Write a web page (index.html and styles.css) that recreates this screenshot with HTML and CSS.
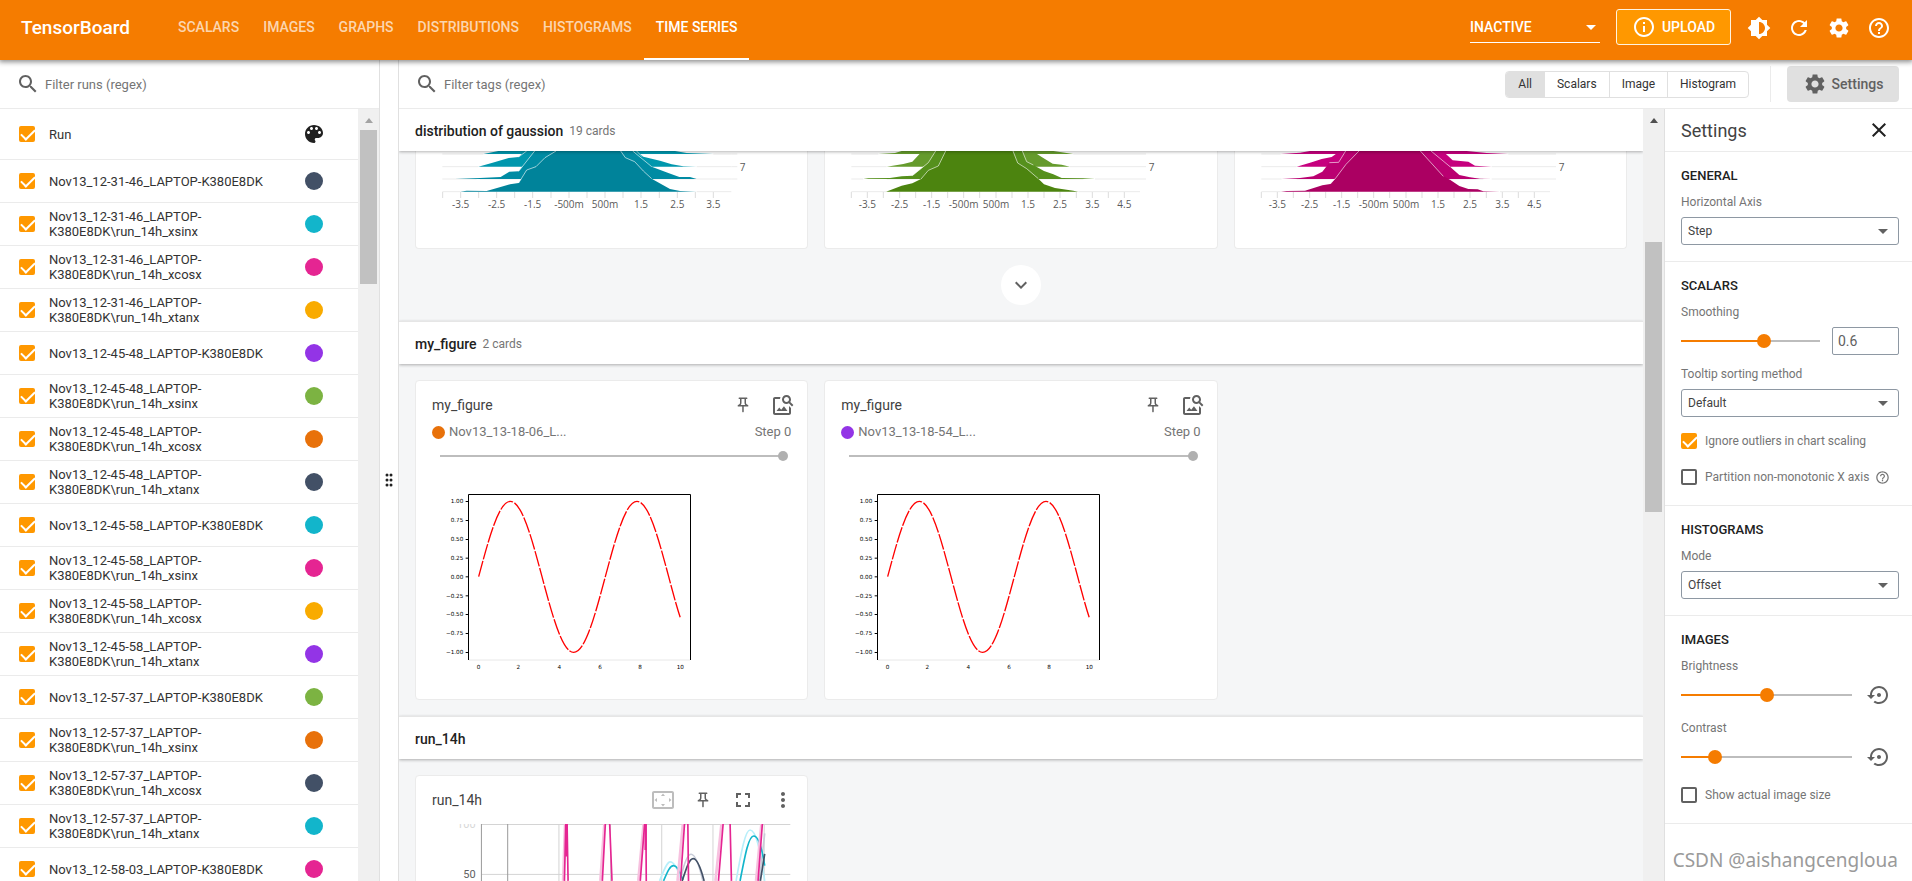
FILE: index.html
```html
<!DOCTYPE html>
<html lang="en">
<head>
<meta charset="utf-8">
<title>TensorBoard</title>
<link rel="stylesheet" href="styles.css">
</head>
<body>
<svg class="sprite" aria-hidden="true">
  <symbol id="search" viewBox="0 0 24 24"><path d="M15.5 14h-.79l-.28-.27C15.41 12.59 16 11.11 16 9.5 16 5.91 13.09 3 9.5 3S3 5.91 3 9.5 5.91 16 9.5 16c1.61 0 3.09-.59 4.23-1.57l.27.28v.79l5 4.99L20.49 19l-4.99-5zm-6 0C7.01 14 5 11.99 5 9.5S7.01 5 9.5 5 14 7.01 14 9.5 11.99 14 9.5 14z"/></symbol>
  <symbol id="palette" viewBox="0 0 24 24"><path d="M12 3c-4.97 0-9 4.03-9 9s4.03 9 9 9c.83 0 1.5-.67 1.5-1.5 0-.39-.15-.74-.39-1.01-.23-.26-.38-.61-.38-.99 0-.83.67-1.5 1.5-1.5H16c2.76 0 5-2.24 5-5 0-4.42-4.03-8-9-8zm-5.5 9c-.83 0-1.5-.67-1.5-1.5S5.67 9 6.5 9 8 9.67 8 10.5 7.33 12 6.5 12zm3-4C8.67 8 8 7.33 8 6.5S8.67 5 9.5 5s1.5.67 1.5 1.5S10.33 8 9.5 8zm5 0c-.83 0-1.5-.67-1.5-1.5S13.67 5 14.5 5s1.5.67 1.5 1.5S15.33 8 14.5 8zm3 4c-.83 0-1.5-.67-1.5-1.5S16.67 9 17.5 9s1.5.67 1.5 1.5-.67 1.5-1.5 1.5z"/></symbol>
  <symbol id="gear" viewBox="0 0 24 24"><path d="M19.14 12.94c.04-.3.06-.61.06-.94 0-.32-.02-.64-.07-.94l2.03-1.58c.18-.14.23-.41.12-.61l-1.92-3.32c-.12-.22-.37-.29-.59-.22l-2.39.96c-.5-.38-1.03-.7-1.62-.94l-.36-2.54c-.04-.24-.24-.41-.48-.41h-3.84c-.24 0-.43.17-.47.41l-.36 2.54c-.59.24-1.13.57-1.62.94l-2.39-.96c-.22-.08-.47 0-.59.22L2.74 8.87c-.12.21-.08.47.12.61l2.03 1.58c-.05.3-.09.63-.09.94s.02.64.07.94l-2.03 1.58c-.18.14-.23.41-.12.61l1.92 3.32c.12.22.37.29.59.22l2.39-.96c.5.38 1.03.7 1.62.94l.36 2.54c.05.24.24.41.48.41h3.84c.24 0 .44-.17.47-.41l.36-2.54c.59-.24 1.13-.56 1.62-.94l2.39.96c.22.08.47 0 .59-.22l1.92-3.32c.12-.22.07-.47-.12-.61l-2.01-1.58zM12 15.6c-1.98 0-3.6-1.62-3.6-3.6s1.62-3.6 3.6-3.6 3.6 1.62 3.6 3.6-1.62 3.6-3.6 3.6z"/></symbol>
  <symbol id="brightness" viewBox="0 0 24 24"><path d="M20 15.31L23.31 12 20 8.69V4h-4.69L12 .69 8.69 4H4v4.69L.69 12 4 15.31V20h4.69L12 23.31 15.31 20H20v-4.69zM12 18V6c3.31 0 6 2.69 6 6s-2.69 6-6 6z"/></symbol>
  <symbol id="refresh" viewBox="0 0 24 24"><path d="M17.65 6.35C16.2 4.9 14.21 4 12 4c-4.42 0-7.99 3.58-7.99 8s3.57 8 7.99 8c3.73 0 6.84-2.55 7.73-6h-2.08c-.82 2.33-3.04 4-5.65 4-3.31 0-6-2.69-6-6s2.69-6 6-6c1.66 0 3.14.69 4.22 1.78L13 11h7V4l-2.35 2.35z"/></symbol>
  <symbol id="help" viewBox="0 0 24 24"><path d="M11 18h2v-2h-2v2zm1-16C6.48 2 2 6.48 2 12s4.48 10 10 10 10-4.48 10-10S17.52 2 12 2zm0 18c-4.41 0-8-3.59-8-8s3.59-8 8-8 8 3.59 8 8-3.59 8-8 8zm0-14c-2.21 0-4 1.79-4 4h2c0-1.1.9-2 2-2s2 .9 2 2c0 2-3 1.75-3 5h2c0-2.25 3-2.5 3-5 0-2.21-1.79-4-4-4z"/></symbol>
  <symbol id="info" viewBox="0 0 24 24"><path d="M11 7h2v2h-2zm0 4h2v6h-2zm1-9C6.48 2 2 6.48 2 12s4.48 10 10 10 10-4.48 10-10S17.52 2 12 2zm0 18c-4.41 0-8-3.59-8-8s3.59-8 8-8 8 3.59 8 8-3.59 8-8 8z"/></symbol>
  <symbol id="close" viewBox="0 0 24 24"><path d="M19 6.41L17.59 5 12 10.59 6.41 5 5 6.41 10.59 12 5 17.59 6.41 19 12 13.41 17.59 19 19 17.59 13.41 12z"/></symbol>
  <symbol id="expand" viewBox="0 0 24 24"><path d="M16.59 8.59L12 13.17 7.41 8.59 6 10l6 6 6-6z"/></symbol>
  <symbol id="fullscreen" viewBox="0 0 24 24"><path d="M7 14H5v5h5v-2H7v-3zm-2-4h2V7h3V5H5v5zm12 7h-3v2h5v-5h-2v3zM14 5v2h3v3h2V5h-5z"/></symbol>
  <symbol id="more" viewBox="0 0 24 24"><path d="M12 8c1.1 0 2-.9 2-2s-.9-2-2-2-2 .9-2 2 .9 2 2 2zm0 2c-1.1 0-2 .9-2 2s.9 2 2 2 2-.9 2-2-.9-2-2-2zm0 6c-1.1 0-2 .9-2 2s.9 2 2 2 2-.9 2-2-.9-2-2-2z"/></symbol>
  <symbol id="overscan" viewBox="0 0 24 24"><path d="M12.01 5.5L10 8h4l-1.99-2.5zM18 10v4l2.5-1.99L18 10zM6 10l-2.5 2.01L6 14v-4zm8 6h-4l2.01 2.5L14 16zm7-13H3c-1.1 0-2 .9-2 2v14c0 1.1.9 2 2 2h18c1.1 0 2-.9 2-2V5c0-1.1-.9-2-2-2zm0 16.01H3V4.99h18v14.02z"/></symbol>
  <symbol id="image-search" viewBox="0 0 24 24"><path d="M18 13v7H4V6h5.02c.05-.71.22-1.38.48-2H4c-1.1 0-2 .9-2 2v14c0 1.1.9 2 2 2h14c1.1 0 2-.9 2-2v-5l-2-2zm-1.5 5h-11l2.75-3.53 1.96 2.36 2.75-3.54zm2.8-9.11c.44-.7.7-1.51.7-2.39C20 4.01 17.99 2 15.5 2S11 4.01 11 6.5s2.01 4.5 4.49 4.5c.88 0 1.7-.26 2.39-.7L21 13.42 22.42 12 19.3 8.89zM15.5 9C14.12 9 13 7.88 13 6.5S14.12 4 15.5 4 18 5.12 18 6.5 16.88 9 15.5 9z"/></symbol>
  <symbol id="pin" viewBox="0 0 24 24"><path d="M14 4v5c0 1.12.37 2.16 1 3H9c.65-.86 1-1.9 1-3V4h4m3-2H7c-.55 0-1 .45-1 1s.45 1 1 1h1v5c0 1.66-1.34 3-3 3v2h5.97v7l1 1 1-1v-7H19v-2c-1.66 0-3-1.34-3-3V4h1c.55 0 1-.45 1-1s-.45-1-1-1z"/></symbol>
  <symbol id="restore" viewBox="0 0 24 24"><path d="M14 12c0-1.1-.9-2-2-2s-2 .9-2 2 .9 2 2 2 2-.9 2-2zm-2-9c-4.97 0-9 4.03-9 9H0l4 4 4-4H5c0-3.87 3.13-7 7-7s7 3.13 7 7-3.13 7-7 7c-1.51 0-2.91-.49-4.06-1.3l-1.42 1.44C8.04 20.3 9.94 21 12 21c4.97 0 9-4.03 9-9s-4.03-9-9-9z"/></symbol>
</svg>

<header class="topbar">
  <h1 class="brand">TensorBoard</h1>
  <nav class="tabs">
    <a class="tab" href="#scalars">SCALARS</a>
    <a class="tab" href="#images">IMAGES</a>
    <a class="tab" href="#graphs">GRAPHS</a>
    <a class="tab" href="#distributions">DISTRIBUTIONS</a>
    <a class="tab" href="#histograms">HISTOGRAMS</a>
    <a class="tab tab-active" href="#timeseries">TIME SERIES</a>
  </nav>
  <div class="top-actions">
    <div class="inactive-wrap"><select class="inactive" aria-label="Inactive plugins"><option>INACTIVE</option></select></div>
    <button class="upload" type="button"><svg class="icon"><use href="#info"/></svg><span>UPLOAD</span></button>
    <button class="icon-btn" type="button" aria-label="Theme"><svg class="icon"><use href="#brightness"/></svg></button>
    <button class="icon-btn" type="button" aria-label="Reload"><svg class="icon"><use href="#refresh"/></svg></button>
    <button class="icon-btn" type="button" aria-label="Preferences"><svg class="icon"><use href="#gear"/></svg></button>
    <button class="icon-btn" type="button" aria-label="Help"><svg class="icon"><use href="#help"/></svg></button>
  </div>
</header>

<div class="workspace">
  <aside class="runs">
    <div class="filter-bar">
      <svg class="icon"><use href="#search"/></svg>
      <input class="filter" type="text" placeholder="Filter runs (regex)" aria-label="Filter runs">
    </div>
    <div class="runs-body">
      <table class="run-table">
        <thead>
          <tr><td class="c-check"><input class="check" type="checkbox" id="rall" checked></td><th><label for="rall">Run</label></th><td class="c-color"><svg class="icon icon-dark"><use href="#palette"/></svg></td></tr>
        </thead>
        <tbody>
          <tr><td class="c-check"><input class="check" type="checkbox" id="r1" checked></td><td><label for="r1">Nov13_12-31-46_LAPTOP-K380E8DK</label></td><td class="c-color"><i class="dot navy"></i></td></tr>
          <tr><td class="c-check"><input class="check" type="checkbox" id="r2" checked></td><td><label for="r2">Nov13_12-31-46_LAPTOP-K380E8DK\run_14h_xsinx</label></td><td class="c-color"><i class="dot cyan"></i></td></tr>
          <tr><td class="c-check"><input class="check" type="checkbox" id="r3" checked></td><td><label for="r3">Nov13_12-31-46_LAPTOP-K380E8DK\run_14h_xcosx</label></td><td class="c-color"><i class="dot pink"></i></td></tr>
          <tr><td class="c-check"><input class="check" type="checkbox" id="r4" checked></td><td><label for="r4">Nov13_12-31-46_LAPTOP-K380E8DK\run_14h_xtanx</label></td><td class="c-color"><i class="dot amber"></i></td></tr>
          <tr><td class="c-check"><input class="check" type="checkbox" id="r5" checked></td><td><label for="r5">Nov13_12-45-48_LAPTOP-K380E8DK</label></td><td class="c-color"><i class="dot purple"></i></td></tr>
          <tr><td class="c-check"><input class="check" type="checkbox" id="r6" checked></td><td><label for="r6">Nov13_12-45-48_LAPTOP-K380E8DK\run_14h_xsinx</label></td><td class="c-color"><i class="dot green"></i></td></tr>
          <tr><td class="c-check"><input class="check" type="checkbox" id="r7" checked></td><td><label for="r7">Nov13_12-45-48_LAPTOP-K380E8DK\run_14h_xcosx</label></td><td class="c-color"><i class="dot orange"></i></td></tr>
          <tr><td class="c-check"><input class="check" type="checkbox" id="r8" checked></td><td><label for="r8">Nov13_12-45-48_LAPTOP-K380E8DK\run_14h_xtanx</label></td><td class="c-color"><i class="dot navy"></i></td></tr>
          <tr><td class="c-check"><input class="check" type="checkbox" id="r9" checked></td><td><label for="r9">Nov13_12-45-58_LAPTOP-K380E8DK</label></td><td class="c-color"><i class="dot cyan"></i></td></tr>
          <tr><td class="c-check"><input class="check" type="checkbox" id="r10" checked></td><td><label for="r10">Nov13_12-45-58_LAPTOP-K380E8DK\run_14h_xsinx</label></td><td class="c-color"><i class="dot pink"></i></td></tr>
          <tr><td class="c-check"><input class="check" type="checkbox" id="r11" checked></td><td><label for="r11">Nov13_12-45-58_LAPTOP-K380E8DK\run_14h_xcosx</label></td><td class="c-color"><i class="dot amber"></i></td></tr>
          <tr><td class="c-check"><input class="check" type="checkbox" id="r12" checked></td><td><label for="r12">Nov13_12-45-58_LAPTOP-K380E8DK\run_14h_xtanx</label></td><td class="c-color"><i class="dot purple"></i></td></tr>
          <tr><td class="c-check"><input class="check" type="checkbox" id="r13" checked></td><td><label for="r13">Nov13_12-57-37_LAPTOP-K380E8DK</label></td><td class="c-color"><i class="dot green"></i></td></tr>
          <tr><td class="c-check"><input class="check" type="checkbox" id="r14" checked></td><td><label for="r14">Nov13_12-57-37_LAPTOP-K380E8DK\run_14h_xsinx</label></td><td class="c-color"><i class="dot orange"></i></td></tr>
          <tr><td class="c-check"><input class="check" type="checkbox" id="r15" checked></td><td><label for="r15">Nov13_12-57-37_LAPTOP-K380E8DK\run_14h_xcosx</label></td><td class="c-color"><i class="dot navy"></i></td></tr>
          <tr><td class="c-check"><input class="check" type="checkbox" id="r16" checked></td><td><label for="r16">Nov13_12-57-37_LAPTOP-K380E8DK\run_14h_xtanx</label></td><td class="c-color"><i class="dot cyan"></i></td></tr>
          <tr><td class="c-check"><input class="check" type="checkbox" id="r17" checked></td><td><label for="r17">Nov13_12-58-03_LAPTOP-K380E8DK</label></td><td class="c-color"><i class="dot pink"></i></td></tr>
        </tbody>
      </table>
      <div class="scrollbar"><i class="arrow arrow-dim"></i><i class="thumb thumb-runs"></i></div>
    </div>
  </aside>

  <div class="resizer">
    <svg class="grip" viewBox="0 0 8 14"><g><circle cx="2" cy="2" r="1.500"/><circle cx="6" cy="2" r="1.500"/><circle cx="2" cy="7" r="1.500"/><circle cx="6" cy="7" r="1.500"/><circle cx="2" cy="12" r="1.500"/><circle cx="6" cy="12" r="1.500"/></g></svg>
  </div>

  <main class="main">
    <div class="filter-bar">
      <svg class="icon"><use href="#search"/></svg>
      <input class="filter" type="text" placeholder="Filter tags (regex)" aria-label="Filter tags">
      <div class="toggles">
        <button class="toggle toggle-on" type="button">All</button>
        <button class="toggle" type="button">Scalars</button>
        <button class="toggle" type="button">Image</button>
        <button class="toggle" type="button">Histogram</button>
      </div>
      <div class="settings-slot">
        <button class="settings-btn" type="button"><svg class="icon"><use href="#gear"/></svg><span>Settings</span></button>
      </div>
    </div>

    <div class="content">
      <div class="groups">
        <section>
          <div class="group-head"><h2 class="group-name">distribution of gaussion</h2><span class="count">19 cards</span></div>
          <div class="grid grid-scrolled">
            <article class="card card-cut">
              <svg class="histo" viewBox="3 18 990 192">
                <path class="guide" d="M37 27H160M850 27H904M37 65H145M800 65H904M37 102H140M800 102H904M150 102H270M665 102H800M37 140H90M800 140H904M904 27h18M904 65h18M904 102h18"/>
                <g fill="#0097ad"><path d="M160 27L205 18H735L770 24L850 27z"/><path d="M75 65L145 65L185 54L236 39L266 36L285 18H620L640 35L690 47L725 58L760 64L800 65z"/></g>
                <path fill="#008ba3" d="M75 102L150 99L212 96L238 80L266 79L314 18H608L665 65L715 84L748 96L780 96L800 102z"/>
                <path class="rim" d="M266 36L290 18M620 18L636 35M266 79L314 18M608 18L665 65"/>
                <path fill="#00839a" d="M90 140L110 137L170 138L240 118L266 114L290 75L318 65L345 38L378 18H572L586 38L614 50L640 78L665 101L720 132L750 138L800 140z"/>
                <path class="rim" d="M266 114L290 75L318 65L345 38L378 18M572 18L586 38L614 50L640 78L665 101"/>
                <path class="ticks" d="M38 141v18M92 141v18M146 141v18M200 141v18M254 141v18M308 141v18M363 141v18M417 141v18M471 141v18M525 141v18M579 141v18M633 141v18M688 141v18M742 141v18M796 141v18M850 141v18"/>
                <g class="axis"><text x="92" y="188">-3.5</text><text x="200" y="188">-2.5</text><text x="308" y="188">-1.5</text><text x="417" y="188">-500m</text><text x="525" y="188">500m</text><text x="633" y="188">1.5</text><text x="742" y="188">2.5</text><text x="850" y="188">3.5</text><text x="938" y="77">7</text></g>
              </svg>
            </article>
            <article class="card card-cut">
              <svg class="histo" viewBox="0 18 990 192">
                <path class="guide" d="M34 27H115M700 27H900M34 65H140M690 65H900M34 102H70M765 102H900M140 102H243M598 102H730M34 140H138M715 140H900M900 27h18M900 65h18M900 102h18"/>
                <g fill="#659b2c"><path d="M115 27L165 24L185 18H640L700 27z"/><path d="M140 65L190 57L217 50L247 18H577L605 36L638 56L665 59L690 65z"/></g>
                <path fill="#55901c" d="M70 102L85 100L150 99L185 94L217 92L265 53L287 18H547L560 50L580 60L612 78L640 88L665 99L730 100L765 102z"/>
                <path class="rim" d="M217 92L265 53L287 18M547 18L560 50L580 60"/>
                <path fill="#4c840f" d="M138 140L185 122L217 115L243 102L265 76L295 63L317 18H519L533 54L560 71L595 101L612 118L645 129L700 137L715 140z"/>
                <path class="rim" d="M243 102L265 76L295 63L317 18M519 18L533 54L560 71L595 101"/>
                <path class="ticks" d="M34 141v18M82 141v18M130 141v18M179 141v18M227 141v18M275 141v18M323 141v18M371 141v18M419 141v18M468 141v18M516 141v18M564 141v18M612 141v18M660 141v18M709 141v18M757 141v18M805 141v18M853 141v18"/>
                <g class="axis"><text x="82" y="188">-3.5</text><text x="179" y="188">-2.5</text><text x="275" y="188">-1.5</text><text x="371" y="188">-500m</text><text x="468" y="188">500m</text><text x="564" y="188">1.5</text><text x="660" y="188">2.5</text><text x="757" y="188">3.5</text><text x="853" y="188">4.5</text><text x="935" y="77">7</text></g>
              </svg>
            </article>
            <article class="card card-cut">
              <svg class="histo" viewBox="0 18 990 192">
                <path class="guide" d="M34 27H92M775 27H900M34 65H140M725 65H900M34 102H95M725 102H900M140 102H254M600 102H700M34 140H92M750 140H900M900 27h18M900 65h18M900 102h18"/>
                <g fill="#c6007e"><path d="M92 27L150 23L180 18H650L710 24L775 27z"/><path d="M140 65L185 52L215 42L245 36L270 18H578L608 46L655 50L675 62L725 65z"/></g>
                <path fill="#ba0071" d="M95 102L150 99L190 94L217 80L238 53L266 52L287 18H543L600 65L628 90L660 97L690 101L725 102z"/>
                <path class="rim" d="M238 53L266 52L287 18M543 18L600 65"/>
                <path fill="#ab0062" d="M92 140L110 138L165 137L217 121L241 117L258 98L288 58L327 18H511L580 94L600 104L628 123L655 132L683 133L700 139L750 140z"/>
                <path class="rim" d="M241 117L258 98L288 58L327 18M511 18L580 94"/>
                <path class="ticks" d="M34 141v18M82 141v18M130 141v18M179 141v18M227 141v18M275 141v18M323 141v18M371 141v18M419 141v18M468 141v18M516 141v18M564 141v18M612 141v18M660 141v18M709 141v18M757 141v18M805 141v18M853 141v18"/>
                <g class="axis"><text x="82" y="188">-3.5</text><text x="179" y="188">-2.5</text><text x="275" y="188">-1.5</text><text x="371" y="188">-500m</text><text x="468" y="188">500m</text><text x="564" y="188">1.5</text><text x="660" y="188">2.5</text><text x="757" y="188">3.5</text><text x="853" y="188">4.5</text><text x="935" y="77">7</text></g>
              </svg>
            </article>
          </div>
          <div class="expand-row"><button class="expand" type="button" aria-label="Show more"><svg class="icon"><use href="#expand"/></svg></button></div>
        </section>

        <section>
          <div class="group-head group-head-line"><h2 class="group-name">my_figure</h2><span class="count">2 cards</span></div>
          <div class="grid">
            <article class="card">
              <div class="card-head"><h3 class="card-title">my_figure</h3>
                <button class="icon-btn" type="button" aria-label="Pin"><svg class="icon icon-pin"><use href="#pin"/></svg></button>
                <button class="icon-btn" type="button" aria-label="Actual size"><svg class="icon"><use href="#image-search"/></svg></button></div>
              <div class="card-run"><i class="dot dot-small orange"></i><span class="run-name">Nov13_13-18-06_L...</span><span>Step 0</span></div>
              <input class="step" type="range" min="0" max="1" value="1" aria-label="Step">
              <svg class="figure" viewBox="96 345 780 570">
                <path fill="none" stroke="#000" stroke-width="3" d="M205.5 870V373.500H871.500V870"/><path fill="none" stroke="#ddd" stroke-width="2" d="M207 870H870"/>
                <path fill="none" stroke="#000" stroke-width="3" d="M197 394.500h8M197 451.500h8M197 508.500h8M197 564.500h8M197 620.500h8M197 677.500h8M197 733.500h8M197 790.500h8M197 847.500h8"/>
                <path class="sine" d="M236 620C267 504 296.600 394 331 394C365.600 394 395 504 426 620C457 736 486.600 847 521 847C555.600 847 585 736 616 620C647 504 676.600 394 711 394C745.600 394 775 504 806 620C818 665 830 710 841 743"/>
                <g class="plot-y"><text x="190" y="400">1.00</text><text x="190" y="457">0.75</text><text x="190" y="514">0.50</text><text x="190" y="570">0.25</text><text x="190" y="626">0.00</text><text x="190" y="683">−0.25</text><text x="190" y="739">−0.50</text><text x="190" y="796">−0.75</text><text x="190" y="853">−1.00</text></g>
                <g class="plot-x"><text x="236" y="896">0</text><text x="355" y="896">2</text><text x="478" y="896">4</text><text x="600" y="896">6</text><text x="720" y="896">8</text><text x="841" y="896">10</text></g>
              </svg>
            </article>
            <article class="card">
              <div class="card-head"><h3 class="card-title">my_figure</h3>
                <button class="icon-btn" type="button" aria-label="Pin"><svg class="icon icon-pin"><use href="#pin"/></svg></button>
                <button class="icon-btn" type="button" aria-label="Actual size"><svg class="icon"><use href="#image-search"/></svg></button></div>
              <div class="card-run"><i class="dot dot-small purple"></i><span class="run-name">Nov13_13-18-54_L...</span><span>Step 0</span></div>
              <input class="step" type="range" min="0" max="1" value="1" aria-label="Step">
              <svg class="figure" viewBox="96 345 780 570">
                <path fill="none" stroke="#000" stroke-width="3" d="M205.5 870V373.500H871.500V870"/><path fill="none" stroke="#ddd" stroke-width="2" d="M207 870H870"/>
                <path fill="none" stroke="#000" stroke-width="3" d="M197 394.500h8M197 451.500h8M197 508.500h8M197 564.500h8M197 620.500h8M197 677.500h8M197 733.500h8M197 790.500h8M197 847.500h8"/>
                <path class="sine" d="M236 620C267 504 296.600 394 331 394C365.600 394 395 504 426 620C457 736 486.600 847 521 847C555.600 847 585 736 616 620C647 504 676.600 394 711 394C745.600 394 775 504 806 620C818 665 830 710 841 743"/>
                <g class="plot-y"><text x="190" y="400">1.00</text><text x="190" y="457">0.75</text><text x="190" y="514">0.50</text><text x="190" y="570">0.25</text><text x="190" y="626">0.00</text><text x="190" y="683">−0.25</text><text x="190" y="739">−0.50</text><text x="190" y="796">−0.75</text><text x="190" y="853">−1.00</text></g>
                <g class="plot-x"><text x="236" y="896">0</text><text x="355" y="896">2</text><text x="478" y="896">4</text><text x="600" y="896">6</text><text x="720" y="896">8</text><text x="841" y="896">10</text></g>
              </svg>
            </article>
          </div>
        </section>

        <section>
          <div class="group-head group-head-line"><h2 class="group-name">run_14h</h2></div>
          <div class="grid">
            <article class="card">
              <div class="card-head"><h3 class="card-title">run_14h</h3>
                <button class="icon-btn" type="button" aria-label="Fit domain" disabled><svg class="icon"><use href="#overscan"/></svg></button>
                <button class="icon-btn" type="button" aria-label="Pin"><svg class="icon icon-pin"><use href="#pin"/></svg></button>
                <button class="icon-btn" type="button" aria-label="Full screen"><svg class="icon"><use href="#fullscreen"/></svg></button>
                <button class="icon-btn" type="button" aria-label="More"><svg class="icon"><use href="#more"/></svg></button></div>
              <svg class="scalar-chart" viewBox="96 372 1080 240">
                <path fill="none" stroke="#d4d4d4" stroke-width="3" d="M245 373.500H1173M245 523.500H1173M477.500 373V612M632.500 373V612M786.500 373V612M940.500 373V612M1094.500 373V612"/>
                <path fill="none" stroke="#999" stroke-width="3" d="M244.500 372V612M323.500 372V612"/>
                <g fill="none" stroke-width="5" stroke-linejoin="round">
                  <path stroke="#b8effa" d="M780 543C795 505 803 486 812 486S832 500 845 540M1010 543C1025 460 1037 390 1052 390C1070 390 1083 450 1096 543"/>
                  <path stroke="#c8ccd8" d="M845 530C855 485 865 463 875 463C887 463 900 500 910 543M1080 543L1096 400"/>
                  <path stroke="#12b5cb" d="M792 543C805 512 812 497 822 497C832 497 840 510 850 540M1022 543C1038 460 1048 408 1063 408C1077 408 1087 440 1096 497"/>
                  <path stroke="#425066" d="M848 543C862 500 870 476 881 476C894 476 904 505 914 543M1083 543L1096 462"/>
                  <path stroke="#f7c1df" stroke-width="8" d="M490 543L496 372M602 543L614 372M716 543L732 372M834 543L850 372M948 543L966 372M1070 543L1086 372"/>
                  <path stroke="#e52592" d="M494 543L498 372M502 372L505 543M608 543L617 372M630 372L637 543M722 543L735 372M739 372L740 543M843 543L855 372M865 372L867 543M957 543L971 372M992 372L996 543M1076 543L1089 372"/>
                  <path stroke="#e52592" stroke-width="7" d="M500 372V470M738 372V450"/>
                </g>
                <g class="scalar-axis"><text x="227" y="384" opacity=".25">100</text><text x="227" y="533">50</text></g>
              </svg>
            </article>
          </div>
        </section>
      </div>
      <div class="scrollbar"><i class="arrow"></i><i class="thumb thumb-main"></i></div>

      <aside class="settings">
        <div class="settings-head"><h2 class="settings-title">Settings</h2><button class="icon-btn icon-dark" type="button" aria-label="Close settings"><svg class="icon"><use href="#close"/></svg></button></div>
        <section class="block">
          <h3 class="block-title">GENERAL</h3>
          <label class="label" for="axis">Horizontal Axis</label>
          <div class="select-wrap"><select class="select" id="axis"><option>Step</option></select></div>
        </section>
        <section class="block">
          <h3 class="block-title">SCALARS</h3>
          <label class="label" for="smooth">Smoothing</label>
          <div class="slider-row"><input class="slider" style="--v:.6" type="range" id="smooth" min="0" max="1" step="0.01" value="0.6"><input class="number" type="text" value="0.6" aria-label="Smoothing value"></div>
          <label class="label label-next" for="tip">Tooltip sorting method</label>
          <div class="select-wrap"><select class="select" id="tip"><option>Default</option></select></div>
          <div class="check-row"><input class="check" type="checkbox" id="outliers" checked><label for="outliers">Ignore outliers in chart scaling</label></div>
          <div class="check-row"><input class="check" type="checkbox" id="partition"><label for="partition">Partition non-monotonic X axis</label><svg class="icon icon-help"><use href="#help"/></svg></div>
        </section>
        <section class="block">
          <h3 class="block-title">HISTOGRAMS</h3>
          <label class="label" for="mode">Mode</label>
          <div class="select-wrap"><select class="select" id="mode"><option>Offset</option></select></div>
        </section>
        <section class="block">
          <h3 class="block-title">IMAGES</h3>
          <label class="label" for="bright">Brightness</label>
          <div class="slider-row slider-row-wide"><input class="slider" style="--v:.5" type="range" id="bright" min="0" max="2" step="0.01" value="1"><button class="icon-btn icon-reset" type="button" aria-label="Reset brightness"><svg class="icon"><use href="#restore"/></svg></button></div>
          <label class="label label-next" for="contrast">Contrast</label>
          <div class="slider-row slider-row-wide"><input class="slider" style="--v:.2" type="range" id="contrast" min="0" max="5" step="0.01" value="1"><button class="icon-btn icon-reset" type="button" aria-label="Reset contrast"><svg class="icon"><use href="#restore"/></svg></button></div>
          <div class="check-row"><input class="check" type="checkbox" id="actual"><label for="actual">Show actual image size</label></div>
        </section>
      </aside>
    </div>
  </main>
</div>
<div class="watermark">CSDN @aishangcengloua</div>
</body>
</html>
```

FILE: styles.css
```css
* { box-sizing: border-box; }
body {
  margin: 0;
  height: 100vh;
  display: flex;
  flex-direction: column;
  overflow: hidden;
  background: #fff;
  color: #212121;
  font-family: Roboto, "Liberation Sans", sans-serif;
  font-size: 13px;
}
h1, h2, h3 { margin: 0; font-weight: 500; }
button, input, select { font-family: inherit; margin: 0; }
button { border: 0; padding: 0; background: none; color: inherit; }
.sprite { position: absolute; width: 0; height: 0; }
.icon { display: block; flex: none; width: 24px; height: 24px; fill: currentColor; }
.icon-dark { color: #212121; }
.icon-pin { width: 18px; height: 18px; }
.icon-btn { flex: none; display: flex; align-items: center; justify-content: center; width: 40px; height: 40px; }
.icon-btn:disabled { color: #bdbdbd; }

/* top bar */
.topbar {
  position: relative;
  z-index: 2;
  flex: none;
  display: flex;
  height: 60px;
  padding: 0 13px 0 21px;
  background: #f57c00;
  color: #fff;
  box-shadow: 0 1px 5px 1px rgba(0, 0, 0, .45);
}
.brand { font-size: 19px; line-height: 56px; }
.tabs { display: flex; margin-left: 36px; }
.tab { padding: 0 12px; color: rgba(255, 255, 255, .7); font-size: 14px; font-weight: 500; line-height: 54px; text-decoration: none; }
.tab-active { color: #fff; border-bottom: 2px solid #fff; }
.top-actions { display: flex; align-items: center; margin-left: auto; padding-bottom: 4px; }
.inactive-wrap { position: relative; width: 130px; height: 29px; margin-right: 16px; border-bottom: 1px solid #fff; }
.inactive-wrap::after { content: ""; position: absolute; right: 4px; top: 11px; border: 5px solid transparent; border-top-color: #fff; border-bottom: 0; }
.inactive { appearance: none; width: 100%; height: 26px; padding: 0; border: 0; background: none; color: #fff; font-size: 14px; font-weight: 500; }
.upload { display: flex; align-items: center; justify-content: center; gap: 6px; width: 115px; height: 36px; margin: 0 8px 2px 0; border: 1px solid #fff3e0; border-radius: 3px; background: #ff9800; font-size: 14px; font-weight: 500; }

/* layout */
.workspace { flex: 1; min-height: 0; display: flex; }
.runs { flex: none; width: 380px; display: flex; flex-direction: column; border-right: 1px solid #e0e0e0; }
.filter-bar { flex: none; display: flex; align-items: center; height: 49px; padding: 0 13px 0 16px; border-bottom: 1px solid #ebebeb; color: #616161; }
.filter { flex: 1; min-width: 0; height: 30px; margin-left: 5px; padding: 0; border: 0; outline: 0; background: none; font-size: 13px; }
.filter::placeholder { color: #757575; opacity: 1; }
.runs-body { flex: 1; min-height: 0; display: flex; align-items: stretch; overflow: hidden; }
.run-table { flex: 1; height: max-content; border-spacing: 0; line-height: 15px; color: #333; table-layout: fixed; }
.run-table th { font-weight: 400; text-align: left; }
.run-table td, .run-table th { height: 43px; padding: 0; border-bottom: 1px solid #ebebeb; }
.run-table thead td, .run-table thead th { height: 51px; }
.run-table .c-check { width: 49px; padding-left: 19px; }
.run-table .c-color { width: 84px; padding-left: 28px; }
.run-table .dot { margin-left: 3px; }
.dot { display: block; flex: none; width: 18px; height: 18px; border-radius: 50%; }
.dot-small { width: 13px; height: 13px; }
.navy { background: #425066; }
.cyan { background: #12b5cb; }
.pink { background: #e52592; }
.amber { background: #f9ab00; }
.purple { background: #9334e6; }
.green { background: #7cb342; }
.orange { background: #e8710a; }

.scrollbar { flex: none; width: 21px; display: flex; flex-direction: column; align-items: center; background: #f0f0f0; }
.arrow { margin-top: 9px; border: 4px solid transparent; border-top: 0; border-bottom: 5px solid #505050; }
.arrow-dim { border-bottom-color: #a3a3a3; }
.thumb { width: 17px; background: #c1c1c1; }
.thumb-runs { margin-top: 7px; height: 20%; }
.thumb-main { margin-top: 119px; height: 35%; }

.resizer { flex: none; width: 18px; display: flex; align-items: center; justify-content: center; }
.grip { width: 8px; height: 14px; margin-top: 18px; fill: #212121; }

.main { flex: 1; min-width: 0; display: flex; flex-direction: column; border-left: 1px solid #e0e0e0; }
.toggles { display: flex; height: 27px; border: 1px solid #e0e0e0; border-radius: 4px; overflow: hidden; }
.toggle { padding: 0 12px; border-left: 1px solid #e0e0e0; color: #333; font-size: 12px; }
.toggle:first-child { border-left: 0; }
.toggle-on { background: #e0e0e0; }
.settings-slot { display: flex; margin-left: 21px; padding-left: 16px; border-left: 1px solid #ebebeb; }
.settings-btn { display: flex; align-items: center; justify-content: center; gap: 5px; width: 112px; height: 36px; border-radius: 4px; background: #e0e0e0; font-size: 14px; font-weight: 500; }

.content { flex: 1; min-height: 0; display: flex; }
.groups { flex: 1; min-width: 0; overflow: hidden; background: #f5f6f7; }
.group-head { position: relative; z-index: 1; display: flex; align-items: center; gap: 6px; height: 42px; padding: 2px 16px 0; background: #fff; box-shadow: 0 1px 3px rgba(0, 0, 0, .3); }
.group-head-line { height: 43px; border-top: 1px solid #e6e6e6; }
.group-name { font-size: 14px; }
.count { color: #757575; font-size: 12px; }
.grid { display: grid; grid-template-columns: repeat(3, 1fr); gap: 16px; padding: 16px; }
.grid-scrolled { padding: 0 16px; }
.card { min-width: 0; padding: 4px 16px 24px; border: 1px solid #ebebeb; border-radius: 4px; background: #fff; color: #616161; }
.card-cut { padding: 0 0 33px 15px; border-top: 0; border-radius: 0 0 4px 4px; }
.card-head { display: flex; align-items: center; margin-right: -12px; }
.card-title { flex: 1; color: #424242; font-size: 14px; font-weight: 400; }
.card-run { display: flex; align-items: center; height: 14px; font-size: 13px; color: #757575; line-height: 14px; }
.run-name { flex: 1; margin-left: 4px; }
.step { appearance: none; display: block; width: calc(100% - 6px); height: 16px; margin: 9px 0 21px 3px; background: linear-gradient(#bdbdbd, #bdbdbd) 5px 50% / calc(100% - 10px) 2px no-repeat; }
.step::-webkit-slider-thumb { appearance: none; width: 10px; height: 10px; border-radius: 50%; background: #b0b0b0; }
.histo { display: block; width: 330px; height: 64px; }
.figure { display: block; width: 260px; height: 190px; }
.scalar-chart { display: block; width: 100%; margin-top: 4px; }
.rim { fill: none; stroke: #fff; stroke-opacity: .6; stroke-width: 3; }
.guide { fill: none; stroke: #ebebeb; stroke-width: 3; }
.ticks { fill: none; stroke: #ddd; stroke-width: 3; }
.axis { fill: #5a5a5a; font-family: "Open Sans", sans-serif; font-size: 30px; text-anchor: middle; }
.sine { fill: none; stroke: #f00; stroke-width: 4; stroke-dasharray: 48 5; }
.plot-y, .plot-x { fill: #000; font-family: "DejaVu Sans", sans-serif; font-size: 17px; }
.plot-y { text-anchor: end; }
.plot-x { text-anchor: middle; }
.scalar-axis { fill: #616161; font-size: 33px; text-anchor: end; }
.expand-row { display: flex; justify-content: center; padding: 16px; }
.expand { display: flex; align-items: center; justify-content: center; width: 40px; height: 40px; border-radius: 50%; background: #fff; color: #616161; }

/* settings pane */
.settings { flex: none; width: 248px; overflow: hidden; border-left: 1px solid #e0e0e0; color: #757575; }
.settings-head { display: flex; align-items: center; justify-content: space-between; height: 43px; padding: 0 13px 0 16px; border-bottom: 1px solid #ebebeb; }
.settings-title { color: #424242; font-size: 18px; font-weight: 400; }
.block { padding: 16px 13px 16px 16px; border-bottom: 1px solid #ebebeb; font-size: 12px; }
.block-title { color: #212121; font-size: 13px; line-height: 16px; }
.label { display: block; margin: 10px 0 7px; line-height: 16px; }
.label-next { margin-top: 11px; }
.select-wrap { position: relative; }
.select-wrap::after { content: ""; position: absolute; right: 11px; top: 12px; border: 5px solid transparent; border-top-color: #616161; border-bottom: 0; }
.select { appearance: none; display: block; width: 100%; height: 28px; padding: 0 6px; border: 1px solid #8e98a3; border-radius: 3px; background: #fff; color: #424242; font-size: 12px; }
.slider-row { display: flex; align-items: center; gap: 5px; height: 28px; }
.slider-row-wide { gap: 0; }
.slider {
  appearance: none; flex: 1; min-width: 0; height: 14px; margin-left: -7px;
  background:
    linear-gradient(#f57c00, #f57c00) 7px 50% / calc((100% - 14px) * var(--v)) 2px no-repeat,
    linear-gradient(#bdbdbd, #bdbdbd) 7px 50% / calc(100% - 14px) 2px no-repeat;
}
.slider::-webkit-slider-thumb { appearance: none; width: 14px; height: 14px; border-radius: 50%; background: #f57c00; }
.number { width: 67px; height: 28px; padding: 0 5px; border: 1px solid #8e98a3; border-radius: 2px; color: #616161; font-size: 14px; }
.icon-reset { color: #616161; }
.check-row { display: flex; align-items: center; gap: 8px; height: 16px; margin-top: 16px; }
.check-row + .check-row { margin-top: 20px; }
.check-row:last-child { margin-bottom: 4px; }
.icon-help { width: 15px; height: 15px; margin-left: -2px; }
.check { appearance: none; position: relative; display: block; flex: none; width: 16px; height: 16px; border: 2px solid #616161; border-radius: 2px; background: #fff; }
.check:checked { border-color: #ff9800; background: #ff9800; }
.check:checked::after { content: ""; position: absolute; left: 0; top: 1px; width: 12px; height: 6px; border: solid #fff; border-width: 0 0 2px 2px; transform: rotate(-45deg); }
.watermark { position: absolute; z-index: 3; right: 14px; bottom: 8px; color: #9a9a9a; font-family: "Noto Sans", sans-serif; font-size: 19px; text-shadow: 1px 1px 0 #fff; }
```
